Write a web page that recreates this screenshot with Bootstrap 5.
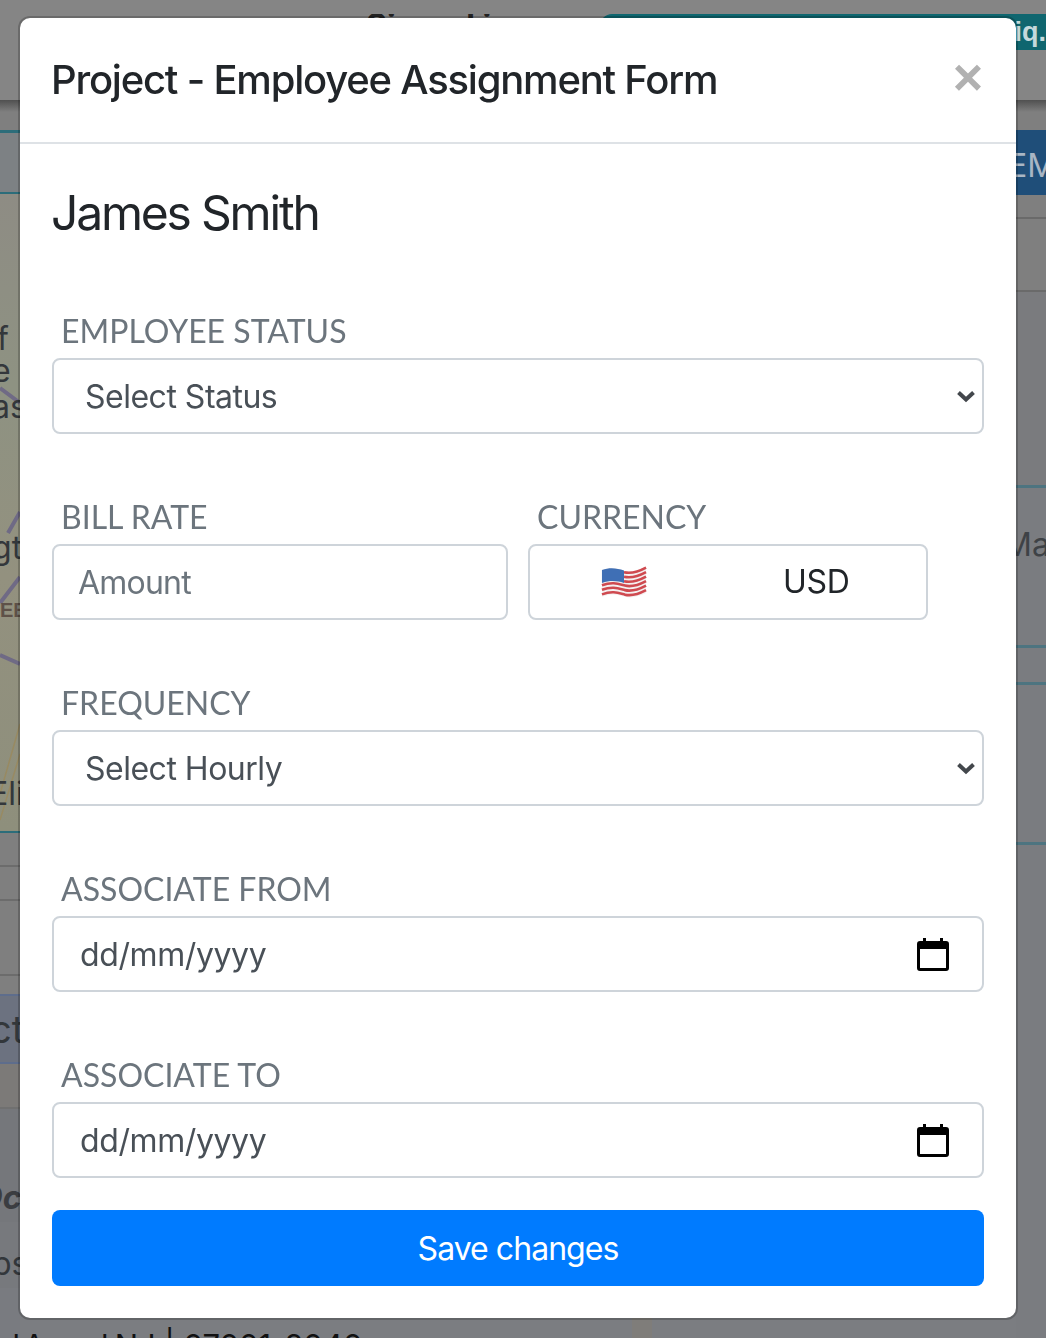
<!DOCTYPE html>
<html lang="en">
<head>
<meta charset="utf-8">
<title>Project - Employee Assignment Form</title>
<link rel="stylesheet" href="https://cdn.jsdelivr.net/npm/bootstrap@5.3.0/dist/css/bootstrap.min.css">
<style>
html,body{margin:0;height:1338px;overflow:hidden;background:#7b7d81;font-family:Inter,"Liberation Sans",sans-serif}
.stage{height:1338px;overflow:hidden;color:#33373b}
.topbar{height:100px;background:#858585;overflow:hidden}
.topbar-line{height:36px;margin-top:14px}
.signed{padding-left:366px;font-size:32px;font-weight:700;line-height:36px;margin-top:-6px;color:#222;white-space:nowrap}
.signed-wrap{width:600px;overflow:hidden;height:4px}
.teal-pill{flex:1;background:#0f666f;border-radius:12px 0 0 0;color:#c4d9dc;font:700 27px/36px "Liberation Sans",sans-serif;text-align:right}
.drop{height:12px;background:linear-gradient(#505050,#7f7f7f)}
.mid{height:1226px}
.side{overflow:hidden}
.side-l{width:20px}
.side-r{width:30px}
.gap-col{width:996px;flex:none}
.clip{overflow:hidden;white-space:nowrap;display:flex;align-items:center;font-size:32px;line-height:48px;color:#33373b}
.bl{background:#7f7f7f}
.l1{height:18px}
.l2{height:64px;background:#7d8184;border-top:3px solid #2c6d7a;border-bottom:2px solid #2c6d7a}
.map{height:637px;background-color:#8a8d80;background-image:url("data:image/svg+xml,%3Csvg xmlns='http://www.w3.org/2000/svg' width='20' height='637'%3E%3Cpath d='M0 194L20 209M8 339L20 318M0 409L20 383M0 461L20 470' stroke='%236f6a85' stroke-width='4' fill='none'/%3E%3Cpath d='M0 626L20 560M0 600L20 530' stroke='%23988a62' stroke-width='1.500' fill='none'/%3E%3C/svg%3E"),linear-gradient(#8e8c84,#8e9282 30%,#93917f 60%,#8e8f7c)}
.m1{height:129px;}
.m2{height:32px;text-indent:-3px}
.m3{height:32px;text-indent:-8px}
.m4{height:40px;text-indent:-8px}
.m5{height:145px;align-items:flex-end;text-indent:-8px}
.m6{height:76px;font:700 20px/1 "Liberation Sans",sans-serif;color:#5e5148}
.m7{height:183px;align-items:flex-end;padding-bottom:13px;text-indent:-11px}
.l3{height:34px;border-top:2px solid #2c6d7a}
.l4{height:34px;border-top:2px solid #6c6c6c}
.l5{height:75px;border-top:2px solid #6c6c6c}
.l6{height:20px;border-top:2px solid #6c6c6c}
.l7{height:70px;background:#6c7280;border-top:2px solid #5e6d8c;border-bottom:2px solid #5e6d8c;font-size:38px;text-indent:-10px}
.l8{height:43px;background:#7c7a78}
.l9{height:115px;background:#75777b;border-top:2px solid #707070;font-style:italic;font-weight:700;color:#3b3d41;align-items:flex-end;text-indent:-22px}
.l10{height:66px;background:#77797d;align-items:flex-end;text-indent:-8px}
.base{height:50px;background:#797b80}
.r1{height:18px}
.r2{height:65px;background:#1f4e79;color:#a9b6c4;padding-top:6px;text-indent:-8px}
.r3{height:22px;background:#7f7f7f}
.r4{height:73px;background:#7f7f7f;border-top:2px solid #6a6a6a}
.r5{height:195px;background:#7a7b7e;border-top:2px solid #6a6a6a}
.r6{height:160px;background:#7a7c80;border-top:3px solid #4d7480;color:#3e4246;align-items:flex-start;padding-top:33px;text-indent:-13px}
.r7{height:37px;background:#7a7c80;border-top:3px solid #4d7480}
.r8{height:160px;background:#7a7c80;border-top:3px solid #4d7480}
.r9{flex:1;background:#7a7c80;border-top:3px solid #4d7480}
.foot{position:absolute;left:1px;top:1328px;font-size:31px;line-height:36px;color:#111;white-space:nowrap}
.foot-a{letter-spacing:-2.6px}
.foot-col{position:absolute;left:632px;top:1318px;width:20px;height:20px;background:#7f7d7a}

.modal-dialog.sheet{max-width:1000px;width:1000px;margin:16px 0 0 18px}
.sheet .modal-content{border:2px solid rgba(0,0,0,.2);border-radius:12px}
.sheet .modal-header{padding:32px;height:126px;border-bottom:2px solid #dee2e6;align-items:flex-start}
.sheet .modal-title{font:500 40px/60px Inter,"Liberation Sans",sans-serif;color:#212529;letter-spacing:-1.22px;margin-left:-1px}
.x-btn{background:none;border:0;padding:0;margin:-9px -1px 0 0;width:34px;font:700 52px/72px "Liberation Sans",sans-serif;color:#b1b1b1}
.sheet .modal-body{padding:32px}
.who{font:400 48px/58px Inter,"Liberation Sans",sans-serif;color:#212529;margin:8px 0 65px -1px;letter-spacing:-2.2px}
.fld{margin-bottom:59px}
.fld-last{margin-bottom:32px}
.lab{display:block;font:400 32px/48px Lato,"Liberation Sans",sans-serif;color:#6c757d;padding-left:9px;margin-bottom:3px;letter-spacing:0}
.box.form-control,.box.form-select{height:76px;border:2px solid #ced4da;border-radius:8px;font:400 32px/44px Inter,"Liberation Sans",sans-serif;color:#495057;box-shadow:none;letter-spacing:-.3px}
.box.form-select{padding:2px 60px 0 31px;background-image:none;-webkit-appearance:none;appearance:none;background-color:#fff;letter-spacing:-.5px}
.box.form-control{padding:2px 26px 0}
.box.amt.form-control{padding:0 24px;letter-spacing:-.8px}
.box.form-control::placeholder{color:#6c757d;opacity:1}
.chev{position:absolute;right:8px;top:31px;width:20px;height:14px;pointer-events:none}
.bill-gap{gap:20px}
.bill{width:456px}
.cur-col{width:400px}
.cur{height:76px;border:2px solid #ced4da;border-radius:8px;padding-left:71px}
.cur-code{margin-left:136px;font:400 32px/1 Inter,"Liberation Sans",sans-serif;color:#212529;letter-spacing:-.3px}
.flag{width:46px;height:35px;display:block;position:relative;top:-1px}
.date-ic{width:32px;height:34px;margin:-2px 7px 0 0}
.date-t{letter-spacing:-.4px}
.save.btn{width:100%;height:76px;background:#007bff;border:0;border-radius:8px;font:400 32px/1 Inter,"Liberation Sans",sans-serif;letter-spacing:-.95px;color:#fff;padding:2px 0 0}
</style>
</head>
<body>
<div class="stage position-relative">
  <div class="topbar">
    <div class="topbar-line d-flex">
      <div class="signed-wrap"><div class="signed">Signed in as</div></div>
      <div class="teal-pill">iq.</div>
    </div>
  </div>
  <div class="drop"></div>
  <div class="mid d-flex">
    <div class="side side-l d-flex flex-column">
      <div class="bl l1"></div>
      <div class="l2"></div>
      <div class="map">
        <div class="m1"></div>
        <div class="clip m2">f</div>
        <div class="clip m3">e</div>
        <div class="clip m4">as</div>
        <div class="clip m5">gto</div>
        <div class="clip m6">EEE</div>
        <div class="clip m7">Eli</div>
      </div>
      <div class="bl l3"></div>
      <div class="bl l4"></div>
      <div class="bl l5"></div>
      <div class="bl l6"></div>
      <div class="clip l7">ct</div>
      <div class="l8"></div>
      <div class="clip l9">Oc</div>
      <div class="clip l10">ps</div>
      <div class="base"></div>
    </div>
    <div class="gap-col"></div>
    <div class="side side-r d-flex flex-column">
      <div class="r1 bl"></div>
      <div class="clip r2">EM</div>
      <div class="r3"></div>
      <div class="r4"></div>
      <div class="r5"></div>
      <div class="clip r6">Ma</div>
      <div class="r7"></div>
      <div class="r8"></div>
      <div class="r9"></div>
    </div>
  </div>
  <div class="foot"><span class="foot-a">d Avenel</span> NJ | 07001-2040</div>
  <div class="foot-col"></div>
</div>

<div class="modal d-block" tabindex="-1">
  <div class="modal-dialog sheet">
    <div class="modal-content">
      <div class="modal-header justify-content-between">
        <h5 class="modal-title">Project - Employee Assignment Form</h5>
        <button type="button" class="x-btn" aria-label="Close">×</button>
      </div>
      <div class="modal-body">
        <h3 class="who">James Smith</h3>
        <div class="fld position-relative">
          <label class="lab">EMPLOYEE STATUS</label>
          <div class="position-relative">
            <select class="form-select box"><option>Select Status</option></select>
            <svg class="chev" viewBox="0 0 20 14"><path d="M2.500 3.500L10 10.500L17.500 3.500" fill="none" stroke="#43474c" stroke-width="4"/></svg>
          </div>
        </div>
        <div class="fld d-flex bill-gap">
          <div class="bill">
            <label class="lab">BILL RATE</label>
            <input class="form-control box amt" type="text" placeholder="Amount">
          </div>
          <div class="cur-col">
            <label class="lab">CURRENCY</label>
            <div class="cur d-flex align-items-center">
              <svg class="flag" viewBox="0 0 48 36">
                <path d="M1 6C12 2 18 5 25 7C33 9 40 6 47 2V30C40 33 33 36 25 34C18 32 12 30 1 34Z" fill="#f4f0f0"/>
                <g fill="none" stroke="#cf4a50" stroke-width="2.700">
                  <path d="M24 8.300C33 10.300 40 7.300 47 3.500"/>
                  <path d="M24 13C33 15 40 12 47 8.200"/>
                  <path d="M24 17.700C33 19.700 40 16.700 47 12.900"/>
                  <path d="M1 22C12 18 18 20.500 25 22.300C33 24.300 40 21.300 47 17.600"/>
                  <path d="M1 26.700C12 22.700 18 25.200 25 27C33 29 40 26 47 22.300"/>
                  <path d="M1 31.400C12 27.400 18 29.900 25 31.700C33 33.700 40 30.700 47 27"/>
                </g>
                <path d="M1 6C10 3 17 4.500 24 6.500V19.500C17 17.500 10 16.500 1 19.500Z" fill="#3f6fb5"/>
              </svg>
              <span class="cur-code">USD</span>
            </div>
          </div>
        </div>
        <div class="fld position-relative">
          <label class="lab">FREQUENCY</label>
          <div class="position-relative">
            <select class="form-select box"><option>Select Hourly</option></select>
            <svg class="chev" viewBox="0 0 20 14"><path d="M2.500 3.500L10 10.500L17.500 3.500" fill="none" stroke="#43474c" stroke-width="4"/></svg>
          </div>
        </div>
        <div class="fld">
          <label class="lab">ASSOCIATE FROM</label>
          <div class="form-control box d-flex align-items-center justify-content-between">
            <span class="date-t">dd/mm/yyyy</span>
            <svg class="date-ic" viewBox="0 0 32 34"><path fill-rule="evenodd" d="M6 1h3v3h14V1h3v3h3a3 3 0 0 1 3 3v24a3 3 0 0 1-3 3H3a3 3 0 0 1-3-3V7a3 3 0 0 1 3-3h3zM3 12v19h26V12z" fill="#000"/></svg>
          </div>
        </div>
        <div class="fld fld-last">
          <label class="lab">ASSOCIATE TO</label>
          <div class="form-control box d-flex align-items-center justify-content-between">
            <span class="date-t">dd/mm/yyyy</span>
            <svg class="date-ic" viewBox="0 0 32 34"><path fill-rule="evenodd" d="M6 1h3v3h14V1h3v3h3a3 3 0 0 1 3 3v24a3 3 0 0 1-3 3H3a3 3 0 0 1-3-3V7a3 3 0 0 1 3-3h3zM3 12v19h26V12z" fill="#000"/></svg>
          </div>
        </div>
        <button type="button" class="btn btn-primary save">Save changes</button>
      </div>
    </div>
  </div>
</div>
<script src="https://cdn.jsdelivr.net/npm/bootstrap@5.3.0/dist/js/bootstrap.bundle.min.js"></script>
</body>
</html>
